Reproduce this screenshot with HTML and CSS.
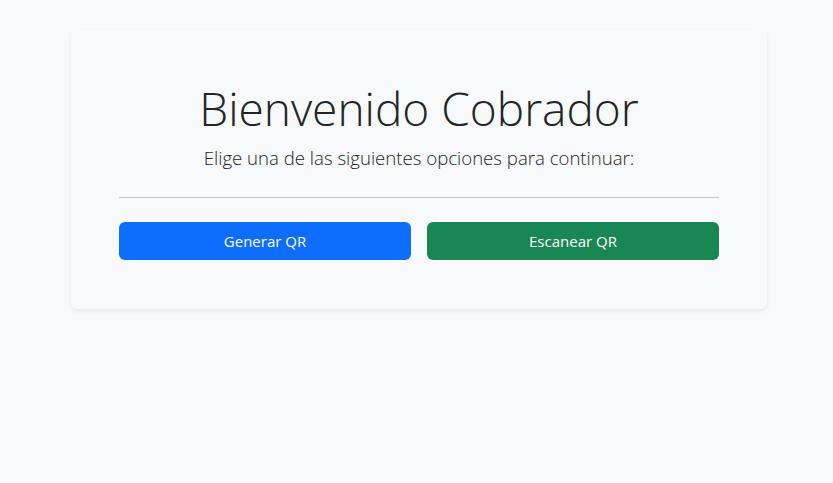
FILE: index.html
```html
<!DOCTYPE html>
<html lang="es">
<head>
<meta charset="utf-8">
<title>Bienvenido Cobrador</title>
<link rel="stylesheet" href="styles.css">
</head>
<body>
<div class="page">
  <main class="card">
    <h1 class="title">Bienvenido Cobrador</h1>
    <p class="lead">Elige una de las siguientes opciones para continuar:</p>
    <hr class="divider">
    <div class="actions">
      <button class="btn btn-primary" type="button">Generar QR</button>
      <button class="btn btn-success" type="button">Escanear QR</button>
    </div>
  </main>
</div>
</body>
</html>
```
FILE: styles.css
```css
* { box-sizing: border-box; }
html, body { margin: 0; height: 100%; }
body {
  background: #f8f9fa;
  color: #212529;
  font-family: "Open Sans", "Noto Sans", sans-serif;
}
.page {
  padding: 30px 0 0 5px;
}
.card {
  width: 696px;
  margin: 0 auto;
  padding: 48px 48px 49px;
  background: #f8f9fa;
  border-radius: 6px;
  box-shadow: 0 2px 4px rgba(0,0,0,0.075);
  text-align: center;
}
.title {
  margin: 0 0 7px;
  padding-top: 3px;
  font-size: 46px;
  font-weight: 300;
  line-height: 55px;
  color: #212529;
}
.lead {
  margin: 0;
  font-size: 18.6px;
  font-weight: 300;
  line-height: 30px;
  color: #212529;
}
.divider {
  margin: 24px 0 24px;
  border: 0;
  border-top: 1px solid #c6c7c8;
}
.actions {
  display: grid;
  grid-template-columns: 1fr 1fr;
  gap: 16px;
}
.btn {
  height: 38px;
  border: 0;
  border-radius: 6px;
  color: #fff;
  font-family: inherit;
  font-size: 15px;
  cursor: pointer;
}
.btn-primary { background: #0d6efd; }
.btn-success { background: #198754; }
```
